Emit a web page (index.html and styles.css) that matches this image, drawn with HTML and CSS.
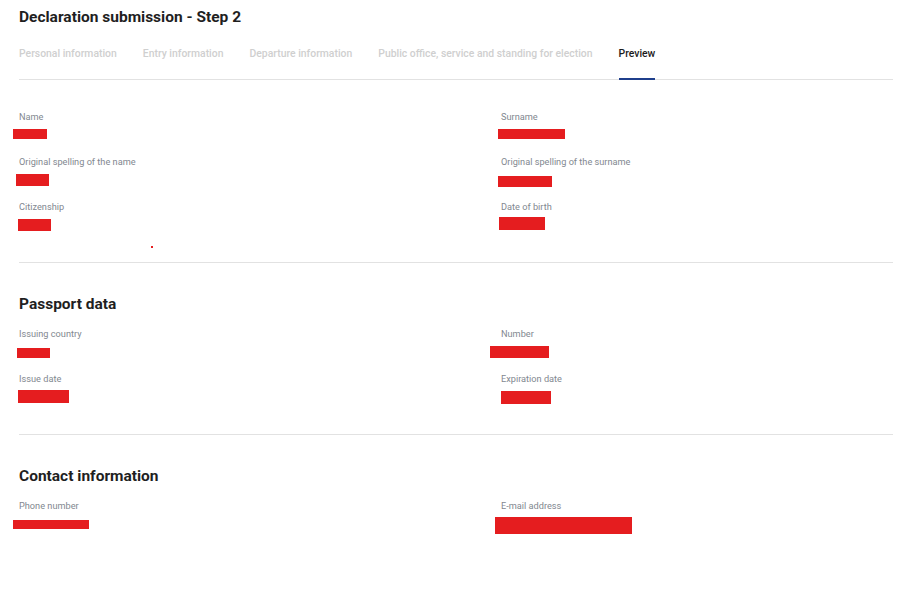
FILE: index.html
```html
<!DOCTYPE html>
<html>
<head>
    <title>Declaration submission - Step 2</title>
    <link rel="stylesheet" href="styles.css">
</head>
<body>
    <div class="page">
        <h1 class="title">Declaration submission - Step 2</h1>

        <div class="tabs">
            <div class="tab">Personal information</div>
            <div class="tab">Entry information</div>
            <div class="tab">Departure information</div>
            <div class="tab">Public office, service and standing for election</div>
            <div class="tab active">Preview</div>
        </div>

        <div class="section first">
            <div class="grid">
                <div class="field">
                    <div class="label">Name</div>
                    <div class="value"><span class="mark" style="width:34px;height:10px;margin-left:-6px;margin-top:5px"></span></div>
                </div>
                <div class="field">
                    <div class="label">Surname</div>
                    <div class="value"><span class="mark" style="width:67px;height:10px;margin-left:-3px;margin-top:5px"></span></div>
                </div>
                <div class="field">
                    <div class="label">Original spelling of the name</div>
                    <div class="value"><span class="mark" style="width:33px;height:12px;margin-left:-3px;margin-top:5px"></span></div>
                </div>
                <div class="field">
                    <div class="label">Original spelling of the surname</div>
                    <div class="value"><span class="mark" style="width:54px;height:11px;margin-left:-3px;margin-top:7px"></span></div>
                </div>
                <div class="field last">
                    <div class="label">Citizenship</div>
                    <div class="value"><span class="mark" style="width:33px;height:12px;margin-left:-1px;margin-top:5px"></span></div>
                    <span class="speck"></span>
                </div>
                <div class="field last">
                    <div class="label">Date of birth</div>
                    <div class="value"><span class="mark" style="width:46px;height:13px;margin-left:-2px;margin-top:3px"></span></div>
                </div>
            </div>
        </div>

        <div class="section">
            <h2 class="heading">Passport data</h2>
            <div class="grid">
                <div class="field">
                    <div class="label">Issuing country</div>
                    <div class="value"><span class="mark" style="width:33px;height:10px;margin-left:-2px;margin-top:7px"></span></div>
                </div>
                <div class="field">
                    <div class="label">Number</div>
                    <div class="value"><span class="mark" style="width:59px;height:12px;margin-left:-11px;margin-top:5px"></span></div>
                </div>
                <div class="field last">
                    <div class="label">Issue date</div>
                    <div class="value"><span class="mark" style="width:51px;height:13px;margin-left:-1px;margin-top:4px"></span></div>
                </div>
                <div class="field last">
                    <div class="label">Expiration date</div>
                    <div class="value"><span class="mark" style="width:50px;height:13px;margin-left:0;margin-top:5px"></span></div>
                </div>
            </div>
        </div>

        <div class="section plain">
            <h2 class="heading">Contact information</h2>
            <div class="grid">
                <div class="field">
                    <div class="label">Phone number</div>
                    <div class="value"><span class="mark" style="width:76px;height:9px;margin-left:-6px;margin-top:7px"></span></div>
                </div>
                <div class="field">
                    <div class="label">E-mail address</div>
                    <div class="value"><span class="mark" style="width:137px;height:17px;margin-left:-6px;margin-top:4px"></span></div>
                </div>
            </div>
        </div>
    </div>
</body>
</html>
```

FILE: styles.css
```css
body {
    margin: 0;
    background-color: #fff;
    font-family: Roboto, "Liberation Sans", Arial, sans-serif;
    color: #222;
}
.page {
    padding: 7px 26px 40px 19px;
}
.title {
    margin: 0;
    font-size: 15.5px;
    line-height: 20px;
    font-weight: 700;
    color: #1f1f1f;
}
.tabs {
    display: flex;
    gap: 26px;
    margin-top: 20px;
    border-bottom: 1px solid #e2e2e2;
}
.tab {
    font-size: 10.4px;
    line-height: 14px;
    font-weight: 500;
    color: #cfcfcf;
    padding-bottom: 18px;
    white-space: nowrap;
}
.tab.active {
    color: #1b1b1b;
    border-bottom: 2px solid #1f3f8c;
    padding-bottom: 16px;
    margin-bottom: -1px;
}
.section {
    padding: 31px 0 28px;
    border-bottom: 1px solid #e2e2e2;
}
.section.first {
    padding-top: 30px;
}
.section.plain {
    border-bottom: none;
}
.heading {
    margin: 0 0 13px;
    font-size: 15.5px;
    line-height: 20px;
    font-weight: 700;
    color: #1f1f1f;
}
.grid {
    display: grid;
    grid-template-columns: 482px 1fr;
}
.field {
    position: relative;
    margin-bottom: 11px;
}
.field.last {
    margin-bottom: 0;
}
.section.plain .field {
    margin-bottom: 0;
}
.label {
    font-size: 9.2px;
    line-height: 14px;
    color: #828890;
}
.value {
    display: flow-root;
    height: 20px;
}
.mark {
    display: block;
    background-color: #e51d1f;
}
.speck {
    position: absolute;
    left: 132px;
    top: 46px;
    width: 2px;
    height: 2px;
    background-color: #e51d1f;
}
```
